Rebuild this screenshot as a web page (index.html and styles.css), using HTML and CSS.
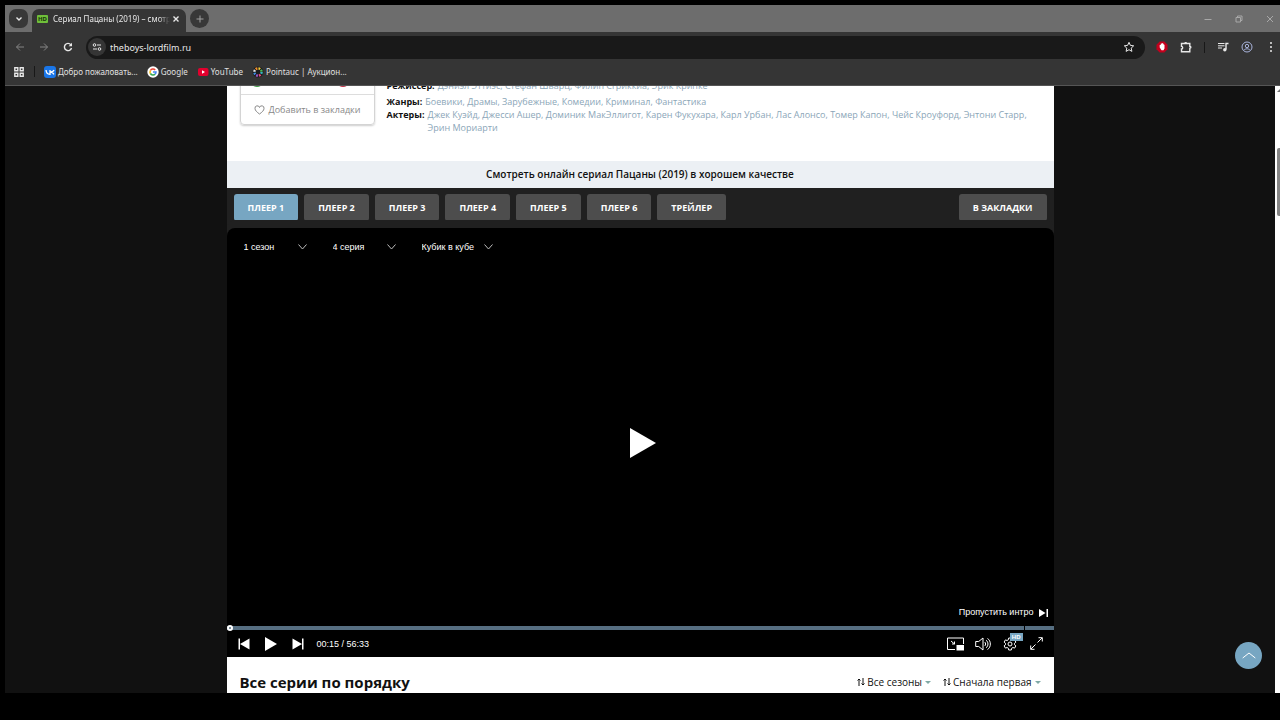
FILE: index.html
```
<!DOCTYPE html>
<html lang="ru">
<head>
    <meta charset="UTF-8">
    <meta name="viewport" content="width=device-width, initial-scale=1.0">
    <title>Сериал Пацаны (2019) – смотреть онлайн</title>
    <link rel="stylesheet" href="styles.css">
</head>
<body>
    <div class="browser">
        <!-- вкладки -->
        <div class="tabstrip">
            <button class="round-btn tab-search" aria-label="Поиск вкладок">
                <svg width="8" height="8" viewBox="0 0 8 8"><path d="M1.5 2.5 4 5l2.5-2.5" class="line bold"/></svg>
            </button>
            <div class="tab">
                <span class="hd-icon">HD</span>
                <span class="tab-title">Сериал Пацаны (2019) – смотр</span>
                <button class="icon-btn tab-close" aria-label="Закрыть">
                    <svg width="8" height="8" viewBox="0 0 8 8"><path d="M1.5 1.5l5 5M6.5 1.5l-5 5" class="line bold"/></svg>
                </button>
            </div>
            <button class="round-btn new-tab" aria-label="Новая вкладка">
                <svg width="8" height="8" viewBox="0 0 8 8"><path d="M4 .5v7M.5 4h7" class="line"/></svg>
            </button>
            <div class="window-btns">
                <button class="icon-btn" aria-label="Свернуть"><svg width="8" height="8" viewBox="0 0 8 8"><path d="M.5 4.5h7" class="line"/></svg></button>
                <button class="icon-btn" aria-label="Развернуть"><svg width="8" height="8" viewBox="0 0 8 8"><path d="M1 2.5h4.5V7H1zM2.5 2.500V1H7v4.500H5.500" class="line"/></svg></button>
                <button class="icon-btn" aria-label="Закрыть окно"><svg width="8" height="8" viewBox="0 0 8 8"><path d="M1 1l6 6M7 1L1 7" class="line"/></svg></button>
            </div>
        </div>

        <!-- адресная строка -->
        <div class="toolbar">
            <button class="icon-btn dim" aria-label="Назад"><svg width="10" height="10" viewBox="0 0 10 10"><path d="M9 5H1.500M5 1.500 1.500 5 5 8.500" class="line"/></svg></button>
            <button class="icon-btn dim" aria-label="Вперёд"><svg width="10" height="10" viewBox="0 0 10 10"><path d="M1 5h7.500M5 1.500 8.500 5 5 8.500" class="line"/></svg></button>
            <button class="icon-btn" aria-label="Обновить"><svg width="10" height="10" viewBox="0 0 10 10"><path d="M8.500 6A3.600 3.600 0 1 1 7.800 2.700" class="line bold"/><path d="M9 .8v3.400H5.600z" fill="currentColor"/></svg></button>
            <div class="omnibox">
                <span class="site-info"><svg width="10" height="10" viewBox="0 0 10 10"><circle cx="2.500" cy="3" r="1.300" class="line"/><path d="M5 3h4M1 7h4" class="line"/><circle cx="7.500" cy="7" r="1.300" class="line"/></svg></span>
                <input type="text" class="url" aria-label="Адрес" value="theboys-lordfilm.ru">
                <button class="icon-btn" aria-label="В избранное"><svg width="12" height="12" viewBox="0 0 12 12"><path d="M6 1.300l1.400 3.100 3.300.4-2.500 2.300.7 3.300L6 8.700l-2.900 1.700.7-3.300L1.300 4.800l3.300-.4z" class="line"/></svg></button>
            </div>
            <button class="icon-btn" aria-label="Блокировщик"><svg width="12" height="12" viewBox="0 0 12 12"><path d="M3.700.5h4.600l3.200 3.200v4.600l-3.200 3.200H3.700L.5 8.300V3.700z" fill="#c4001d"/><path d="M3.700 6.500V4h1V2.700h1V2h1v.7h1v1h.8V7.500L7.500 9.300h-2z" fill="#fff"/></svg></button>
            <button class="icon-btn" aria-label="Расширения"><svg width="12" height="12" viewBox="0 0 12 12"><path d="M1.500 2.500h8.300v2.800c1.400 0 1.400 1.900 0 1.900v3.600H1.500V8c1.600-.1 1.600-2.500 0-2.600z" class="line bold"/><path d="M4.300 2.500a1.400 1.400 0 0 1 2.800 0z" fill="currentColor"/></svg></button>
            <span class="sep"></span>
            <button class="icon-btn" aria-label="Медиа"><svg width="12" height="12" viewBox="0 0 12 12"><path d="M1 2.500h6.500M1 4.800h6.500M1 7h4" class="line"/><path d="M9 8.500V2.500h2.500" class="line bold"/><circle cx="7.800" cy="8.700" r="1.700" fill="currentColor"/></svg></button>
            <button class="icon-btn profile" aria-label="Профиль"><svg width="12" height="12" viewBox="0 0 12 12"><circle cx="6" cy="6" r="5" class="line"/><circle cx="6" cy="5" r="1.700" class="line"/><path d="M2.800 9.300c1.500-2 4.900-2 6.400 0" class="line"/></svg></button>
            <button class="icon-btn menu" aria-label="Меню"><svg width="4" height="12" viewBox="0 0 4 12"><g fill="currentColor"><circle cx="2" cy="2" r="1"/><circle cx="2" cy="6" r="1"/><circle cx="2" cy="10" r="1"/></g></svg></button>
        </div>

        <!-- закладки -->
        <div class="bookmarks">
            <button class="icon-btn" aria-label="Приложения"><svg width="10" height="10" viewBox="0 0 10 10"><path d="M.8.8h3v3h-3zM6.200.8h3v3h-3zM.8 6.200h3v3h-3zM6.200 6.200h3v3h-3z" class="line bold"/></svg></button>
            <span class="sep"></span>
            <a href="#"><svg width="12" height="12" viewBox="0 0 12 12"><rect width="12" height="12" rx="3" fill="#1a76e8"/><path d="M2 4c.2 2.800 1.500 4.300 4 4.300V4M10 4C9.500 5.300 8.400 6 6.200 6c1.800.2 3 1 3.800 2.300" fill="none" stroke="#fff" stroke-width="1.300"/></svg>Добро пожаловать...</a>
            <a href="#"><svg width="12" height="12" viewBox="0 0 12 12"><circle cx="6" cy="6" r="5.700" fill="#fff"/><g fill="none" stroke-width="1.500"><path d="M3.400 4.500A3 3 0 0 1 8.200 3.900" stroke="#ea4335"/><path d="M3.400 4.500a3 3 0 0 0 0 3" stroke="#fbbc05"/><path d="M3.400 7.500a3 3 0 0 0 4.700.6" stroke="#34a853"/><path d="M8.100 8.100A3 3 0 0 0 9 6H6" stroke="#4285f4"/></g></svg>Google</a>
            <a href="#"><svg width="12" height="12" viewBox="0 0 12 12"><rect x="1" y="2" width="10.500" height="8" rx="2" fill="#e3002d"/><path d="M5 4.200v3.600L8 6z" fill="#fff"/></svg>YouTube</a>
            <a href="#"><svg width="12" height="12" viewBox="0 0 12 12"><circle cx="6" cy="6" r="5.500" fill="#1c1c1c"/><g fill="none" stroke-width="2.400"><circle cx="6" cy="6" r="3.600" stroke="#35b6c4" stroke-dasharray="1.800 20.800"/><circle cx="6" cy="6" r="3.600" stroke="#e9457a" stroke-dasharray="1.800 20.800" stroke-dashoffset="-2.800"/><circle cx="6" cy="6" r="3.600" stroke="#9b59d0" stroke-dasharray="1.800 20.800" stroke-dashoffset="-5.600"/><circle cx="6" cy="6" r="3.600" stroke="#3c8ce0" stroke-dasharray="1.800 20.800" stroke-dashoffset="-8.500"/><circle cx="6" cy="6" r="3.600" stroke="#e8e8e8" stroke-dasharray="1.800 20.800" stroke-dashoffset="-11.300"/><circle cx="6" cy="6" r="3.600" stroke="#f08c2e" stroke-dasharray="1.800 20.800" stroke-dashoffset="-14.100"/><circle cx="6" cy="6" r="3.600" stroke="#f2d13c" stroke-dasharray="1.800 20.800" stroke-dashoffset="-17"/><circle cx="6" cy="6" r="3.600" stroke="#4dbd5a" stroke-dasharray="1.800 20.800" stroke-dashoffset="-19.800"/></g></svg>Pointauc | Аукцион...</a>
        </div>

        <div class="viewport">
            <main class="page">
                <section class="info">
                    <div class="card">
                        <div class="rates"><span class="like"></span><span class="dislike"></span></div>
                        <button class="fav-btn"><svg width="11" height="10" viewBox="0 0 11 10"><path d="M5.500 9C3 7.200 1 5.500 1 3.400A2.300 2.300 0 0 1 5.500 2.500 2.300 2.300 0 0 1 10 3.400C10 5.500 8 7.200 5.500 9z" class="line"/></svg>Добавить в закладки</button>
                    </div>
                    <dl class="details">
                        <div class="director"><dt>Режиссер:</dt><dd><a href="#">Дэниэл Эттиэс</a>, <a href="#">Стефан Шварц</a>, <a href="#">Филип Сгриккиа</a>, <a href="#">Эрик Крипке</a></dd></div>
                        <div><dt>Жанры:</dt><dd><a href="#">Боевики</a>, <a href="#">Драмы</a>, <a href="#">Зарубежные</a>, <a href="#">Комедии</a>, <a href="#">Криминал</a>, <a href="#">Фантастика</a></dd></div>
                        <div><dt>Актеры:</dt><dd><a href="#">Джек Куэйд</a>, <a href="#">Джесси Ашер</a>, <a href="#">Доминик МакЭллигот</a>, <a href="#">Карен Фукухара</a>, <a href="#">Карл Урбан</a>, <a href="#">Лас Алонсо</a>, <a href="#">Томер Капон</a>, <a href="#">Чейс Кроуфорд</a>, <a href="#">Энтони Старр</a>,<br><a href="#">Эрин Мориарти</a></dd></div>
                    </dl>
                </section>

                <h2 class="watch-title">Смотреть онлайн сериал Пацаны (2019) в хорошем качестве</h2>

                <div class="player-tabs">
                    <button class="active">ПЛЕЕР 1</button>
                    <button>ПЛЕЕР 2</button>
                    <button>ПЛЕЕР 3</button>
                    <button>ПЛЕЕР 4</button>
                    <button>ПЛЕЕР 5</button>
                    <button>ПЛЕЕР 6</button>
                    <button>ТРЕЙЛЕР</button>
                    <button class="to-fav">В ЗАКЛАДКИ</button>
                </div>

                <section class="player">
                    <div class="selects">
                        <select aria-label="Сезон"><option>1 сезон</option></select>
                        <select aria-label="Серия"><option>4 серия</option></select>
                        <select class="voice" aria-label="Озвучка"><option>Кубик в кубе</option></select>
                    </div>
                    <div class="screen">
                        <button class="icon-btn" aria-label="Смотреть"><svg width="32" height="30" viewBox="0 0 32 30"><path d="M6 0v30l26-15z" fill="#fff"/></svg></button>
                    </div>
                    <button class="skip-btn">Пропустить интро <svg width="9" height="8" viewBox="0 0 9 8"><path d="M0 0v8l6.500-4zM7.500 0H9v8H7.500z" fill="#fff"/></svg></button>
                    <input type="range" class="progress" aria-label="Перемотка" min="0" max="3393" value="0">
                    <div class="controls">
                        <button class="icon-btn" aria-label="Предыдущая"><svg width="12" height="12" viewBox="0 0 12 12"><path d="M.5.500H2v11H.5zM11.500.500v11L2 6z" fill="#fff"/></svg></button>
                        <button class="icon-btn" aria-label="Играть"><svg width="12" height="14" viewBox="0 0 12 14"><path d="M0 0v14l12-7z" fill="#fff"/></svg></button>
                        <button class="icon-btn" aria-label="Следующая"><svg width="12" height="12" viewBox="0 0 12 12"><path d="M11.500.500H10v11h1.500zM.500.500v11L10 6z" fill="#fff"/></svg></button>
                        <span class="time">00:15 / 56:33</span>
                        <div class="right-controls">
                            <button class="icon-btn" aria-label="Картинка в картинке"><svg width="17" height="14" viewBox="0 0 17 14"><path d="M8 12.500H.500V1h16v6" class="line"/><path d="M9.500 8H17v5.500H9.500z" fill="#fff"/><path d="M4 4l3.500 3M7.500 4.500V7H5" class="line"/></svg></button>
                            <button class="icon-btn" aria-label="Звук"><svg width="16" height="14" viewBox="0 0 16 14"><path d="M.700 4.500h3L8 1v12L3.700 9.500h-3zM9.700 5c1.200.8 1.200 3.200 0 4M11 3.200c2.600 1.600 2.600 6 0 7.600M12.500 1.500c3.800 2.200 3.800 8.800 0 11" class="line"/></svg></button>
                            <button class="icon-btn settings" aria-label="Настройки"><svg width="14" height="14" viewBox="0 0 14 14"><path d="M5.700 1h2.600l.4 1.800 1.200.7 1.700-.6 1.300 2.200-1.400 1.200v1.400l1.400 1.200-1.300 2.200-1.700-.6-1.200.7-.4 1.800H5.700l-.4-1.800-1.200-.7-1.700.6-1.300-2.200 1.400-1.200V6.300L1.100 5.100l1.300-2.200 1.700.6 1.200-.7z" class="line"/><circle cx="7" cy="7" r="2" class="line"/></svg><span class="badge">HD</span></button>
                            <button class="icon-btn" aria-label="На весь экран"><svg width="13" height="13" viewBox="0 0 13 13"><path d="M7.500 5.500l4.700-4.700M8.500.700h3.800v3.800M5.500 7.500.800 12.200M.700 8.500v3.800h3.800" class="line"/></svg></button>
                        </div>
                    </div>
                </section>

                <section class="episodes">
                    <h2>Все серии по порядку</h2>
                    <button class="sort-btn"><svg width="8" height="8" viewBox="0 0 8 8"><path d="M2 8V1M.500 2.500 2 1l1.500 1.500M6 0v7M4.500 5.500 6 7l1.500-1.500" class="line"/></svg>Все сезоны<span class="caret"></span></button>
                    <button class="sort-btn"><svg width="8" height="8" viewBox="0 0 8 8"><path d="M2 8V1M.500 2.500 2 1l1.500 1.500M6 0v7M4.500 5.500 6 7l1.500-1.500" class="line"/></svg>Сначала первая<span class="caret"></span></button>
                </section>
            </main>
            <div class="scrollbar"><span class="arrow"></span><span class="thumb"></span></div>
            <button class="go-top" aria-label="Наверх"><svg width="14" height="7" viewBox="0 0 14 7"><path d="M.700 6 7 1l6.300 5" class="line"/></svg></button>
        </div>
    </div>
</body>
</html>
```
FILE: styles.css
```
* {
    box-sizing: border-box;
}
body {
    margin: 0;
    background-color: #000;
    font-family: "Open Sans", "Noto Sans", sans-serif;
    font-size: 9px;
}
button {
    border: none;
    background: none;
    padding: 0;
    margin: 0;
    color: inherit;
    font: inherit;
    cursor: pointer;
}
a {
    text-decoration: none;
}
svg {
    display: block;
    flex: none;
}
.line {
    fill: none;
    stroke: currentColor;
    stroke-width: 1;
}
.line.bold {
    stroke-width: 1.4;
}
.browser {
    display: flex;
    flex-direction: column;
    height: 100vh;
    padding: 5px 0 27px 5px;
    color: #e8e8e8;
    font-family: "Noto Sans", sans-serif;
}
.icon-btn {
    display: flex;
    align-items: center;
    justify-content: center;
    width: 24px;
}

/* вкладки */
.tabstrip {
    display: flex;
    height: 27px;
    padding-left: 4px;
    background-color: #6d6d6d;
    flex: none;
}
.round-btn {
    display: flex;
    align-items: center;
    justify-content: center;
    width: 19px;
    height: 19px;
    margin-top: 4px;
    border-radius: 7px;
    background-color: #383838;
}
.new-tab {
    border-radius: 50%;
    color: #a0a0a0;
}
.tab {
    display: flex;
    align-items: center;
    width: 154px;
    margin: 4px 4px 0;
    padding: 0 4px 4px 5px;
    border-radius: 7px 7px 0 0;
    background-color: #353535;
}
.hd-icon {
    padding: 0 1px;
    border-radius: 1px;
    background-color: #6fbf3a;
    color: #17330a;
    font-size: 6px;
    font-weight: bold;
    line-height: 8px;
}
.tab-title {
    flex: 1;
    margin-left: 5px;
    overflow: hidden;
    white-space: nowrap;
    font-size: 8px;
    -webkit-mask-image: linear-gradient(90deg, #000 90%, transparent);
    mask-image: linear-gradient(90deg, #000 90%, transparent);
}
.tab-close {
    width: 12px;
}
.window-btns {
    display: flex;
    gap: 11px;
    margin-left: auto;
    color: #a8a8a8;
}
.window-btns .icon-btn {
    width: 20px;
}

/* адресная строка */
.toolbar {
    display: flex;
    align-items: center;
    height: 30px;
    padding-left: 3px;
    background-color: #353535;
    flex: none;
}
.dim {
    color: #858585;
}
.omnibox {
    display: flex;
    align-items: center;
    flex: 1;
    height: 23px;
    margin: 0 5px 0 6px;
    padding: 0 4px 0 2px;
    border-radius: 12px;
    background-color: #191919;
}
.site-info {
    display: flex;
    align-items: center;
    justify-content: center;
    width: 18px;
    height: 18px;
    border-radius: 50%;
    background-color: #353535;
}
.url {
    flex: 1;
    padding: 0 0 0 4px;
    border: none;
    outline: none;
    background: none;
    color: #e8e8e8;
    font: inherit;
}
.sep {
    width: 1px;
    height: 11px;
    margin: 0 6px;
    background-color: #181818;
}
.profile {
    color: #a9b4dc;
}
.menu {
    width: 21px;
    padding-left: 2px;
}

/* закладки */
.bookmarks {
    display: flex;
    align-items: center;
    height: 24px;
    padding: 0 0 4px 2px;
    border-bottom: 1px solid #555;
    background-color: #353535;
    font-size: 8px;
    flex: none;
}
.bookmarks .sep {
    margin: 0 9px 0 3px;
}
.bookmarks a {
    display: flex;
    align-items: center;
    gap: 2px;
    margin-right: 9px;
    color: #e0e0e0;
}

/* страница */
.viewport {
    display: flex;
    flex: 1;
    min-height: 0;
    position: relative;
    overflow: hidden;
    background-color: #111;
    font-family: "Open Sans", "Noto Sans", sans-serif;
}
.page {
    display: flex;
    flex-direction: column;
    flex: 1;
    max-width: 827px;
    margin: 0 auto;
    background-color: #fff;
    color: #111;
}
.scrollbar {
    display: flex;
    flex-direction: column;
    align-items: flex-end;
    width: 5px;
    background-color: #fff;
}
.arrow {
    margin-top: 3px;
    border: 3px solid transparent;
    border-top: none;
    border-right-width: 0;
    border-bottom: 3px solid #777;
}
.thumb {
    width: 3px;
    height: 68px;
    margin-top: 56px;
    border-radius: 2px 0 0 2px;
    background-color: #858585;
}
.go-top {
    display: flex;
    align-items: center;
    justify-content: center;
    position: absolute;
    right: 18px;
    bottom: 24px;
    width: 27px;
    height: 27px;
    border-radius: 50%;
    background-color: #77a6c2;
    color: #fff;
}

/* описание */
.info {
    display: flex;
    align-items: flex-end;
    height: 75px;
    padding: 0 13px 27px;
    flex: none;
}
.card {
    width: 135px;
    margin: 0 12px 9px 0;
    border: 1px solid #d4d4d4;
    border-radius: 4px;
    box-shadow: 0 1px 2px rgba(0, 0, 0, 0.2);
}
.rates {
    display: flex;
    justify-content: space-between;
    padding: 0 24px 7px 9px;
    border-bottom: 1px solid #ddd;
}
.like, .dislike {
    width: 14px;
    height: 14px;
    border-radius: 50%;
    background-color: #3f9f46;
}
.dislike {
    background-color: #c22f45;
}
.fav-btn {
    display: flex;
    align-items: center;
    justify-content: center;
    gap: 4px;
    width: 100%;
    height: 29px;
    color: #888;
    white-space: nowrap;
}
.details {
    margin: 0;
    line-height: 13px;
    white-space: nowrap;
}
.details div {
    display: flex;
}
.details .director {
    margin-bottom: 3px;
}
dt {
    margin-right: 3px;
    font-weight: bold;
}
dd {
    margin: 0;
    color: #8ba6b8;
}
dd a {
    color: #8ba6b8;
}
.watch-title {
    margin: 0;
    background-color: #ecf0f4;
    font-size: 10px;
    font-weight: 600;
    line-height: 27px;
    text-align: center;
}
.player-tabs {
    display: flex;
    gap: 6px;
    padding: 6px 7px 7px;
    background-color: #202020;
}
.player-tabs button {
    height: 27px;
    padding: 0 14px;
    border-radius: 3px;
    background-color: #4d4d4d;
    color: #fff;
    font-weight: bold;
    white-space: nowrap;
}
.player-tabs .active {
    background-color: #77a6c2;
}
.player-tabs .to-fav {
    margin-left: auto;
}

/* плеер */
.player {
    display: flex;
    flex-direction: column;
    height: 429px;
    flex: none;
    background-color: #000;
    border-radius: 8px 8px 0 0;
    box-shadow: 0 -8px 0 #202020;
    color: #fff;
    font-family: "Liberation Sans", Arial, sans-serif;
}
.selects {
    display: flex;
    gap: 26px;
    padding: 11px 17px 0;
}
.selects select {
    width: 63px;
    height: 15px;
    padding: 0;
    border: none;
    appearance: none;
    background: url("data:image/svg+xml,%3Csvg xmlns='http://www.w3.org/2000/svg' width='9' height='6'%3E%3Cpath d='M.5.500l4 4.500 4-4.500' fill='none' stroke='%23bbb'/%3E%3C/svg%3E") right center no-repeat;
    color: #fff;
    font: inherit;
}
.selects .voice {
    width: 71px;
}
.screen {
    display: flex;
    align-items: center;
    justify-content: center;
    flex: 1;
    padding-top: 26px;
}
.skip-btn {
    display: flex;
    align-items: center;
    gap: 5px;
    align-self: flex-end;
    margin: 0 6px 6px;
    line-height: 13px;
}
.progress {
    width: 100%;
    height: 6px;
    margin: 0;
    appearance: none;
    background: linear-gradient(90deg, #566e81 797px, #000 797px, #000 798px, #566e81 798px) center / 100% 4px no-repeat;
}
.progress::-webkit-slider-thumb {
    appearance: none;
    width: 6px;
    height: 6px;
    border: 2px solid #fff;
    border-radius: 50%;
    background-color: #566e81;
}
.controls {
    display: flex;
    align-items: center;
    gap: 3px;
    height: 26px;
    padding: 0 5px 1px;
}
.time {
    margin-left: 4px;
}
.right-controls {
    display: flex;
    gap: 3px;
    margin-left: auto;
}
.settings {
    position: relative;
}
.badge {
    position: absolute;
    top: -4px;
    right: -1px;
    padding: 0 2px;
    background-color: #77a6c2;
    font-size: 6px;
    font-weight: bold;
    line-height: 8px;
}

/* список серий */
.episodes {
    display: flex;
    align-items: flex-start;
    gap: 12px;
    flex: 1;
    padding: 14px 13px 0;
    overflow: hidden;
}
.episodes h2 {
    margin: 0 auto 0 0;
    font-size: 15px;
    line-height: 22px;
    white-space: nowrap;
}
.sort-btn {
    display: flex;
    align-items: center;
    gap: 2px;
    font-size: 10px;
    line-height: 22px;
    white-space: nowrap;
}
.caret {
    margin-left: 1px;
    border: 3px solid transparent;
    border-top-color: #7fa9a5;
    border-bottom: none;
}
```
